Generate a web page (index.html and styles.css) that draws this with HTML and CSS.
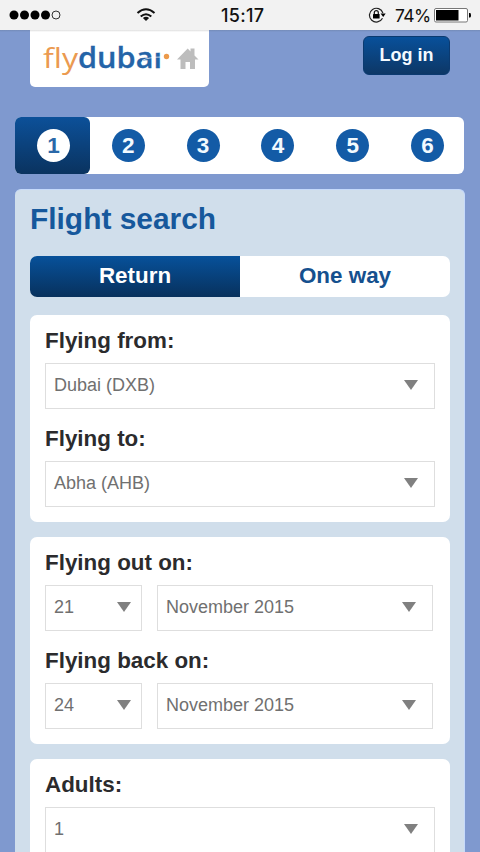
FILE: index.html
```html
<!DOCTYPE html>
<html lang="en">
<head>
<meta charset="utf-8">
<title>flydubai - Flight search</title>
<link rel="stylesheet" href="styles.css">
</head>
<body>
<div class="status">
  <svg class="signal" width="54" height="12" viewBox="0 0 54 12"><circle cx="5" cy="6" r="4.5"/><circle cx="15.5" cy="6" r="4.5"/><circle cx="26" cy="6" r="4.5"/><circle cx="36.500" cy="6" r="4.500"/><circle cx="47" cy="6" r="4" fill="none" stroke="#333"/></svg>
  <svg class="wifi" width="20" height="14" viewBox="0 0 20 14" fill="none" stroke="#111" stroke-width="2"><path d="M1.500 5Q10-2.500 18.500 5M4.700 8.600Q10 3.800 15.300 8.600"/><path d="M10 13 6.900 10Q10 7.700 13.100 10Z" fill="#111" stroke="none"/></svg>
  <span class="time">15:17</span>
  <svg class="lock" width="18" height="16" viewBox="0 0 18 16"><path d="M14.500 11.300A6.900 6.900 0 1 1 14.900 6" fill="none" stroke="#222" stroke-width="1.200"/><path d="M12.600 6.500H17.700L15.200 10Z"/><rect x="5" y="7" width="6.600" height="4.500" rx=".5"/><path d="M6.300 7V5.600a2 2 0 0 1 4 0V7" fill="none" stroke="#111" stroke-width="1.200"/></svg>
  <span class="percent">74%</span>
  <svg class="battery" width="38" height="15" viewBox="0 0 38 15"><rect x=".5" y=".5" width="33" height="13.500" rx="1.500" fill="#fff" stroke="#777"/><rect x="2" y="2" width="22.500" height="10.500"/><path d="M35 5h1q1 0 1 2.200t-1 2.300h-1z"/></svg>
</div>
<header class="header">
  <a class="logo">
    <svg width="179" height="57" viewBox="0 0 179 57">
      <text class="logo-fly" x="13" y="37.500" textLength="35" lengthAdjust="spacingAndGlyphs">fly</text>
      <text class="logo-dubai" x="48" y="38" textLength="84" lengthAdjust="spacingAndGlyphs">dubai</text>
      <path d="M122 14H134V22.500L122 23Z" fill="#fff"/>
      <path d="M112 30.500Q119 27 132 27" fill="none" stroke="#fff" stroke-width=".7"/>
      <circle cx="136.500" cy="26.500" r="2.700" fill="#ec9a4b"/>
      <path d="M147 29.500 157.700 18.500 160.500 21.500V18.500H164.500V25.500L168.500 29.500H165V39H160V32H155.500V39H150.500V29.500Z" fill="#bdbdbd"/>
    </svg>
  </a>
  <a class="login">Log in</a>
</header>
<nav class="steps">
  <div class="step active"><span>1</span></div>
  <div class="step"><span>2</span></div>
  <div class="step"><span>3</span></div>
  <div class="step"><span>4</span></div>
  <div class="step"><span>5</span></div>
  <div class="step"><span>6</span></div>
</nav>
<main class="panel">
  <h1>Flight search</h1>
  <div class="tabs"><div class="tab selected">Return</div><div class="tab">One way</div></div>
  <section class="card">
    <div class="label">Flying from:</div>
    <div class="select">Dubai (DXB)<i class="arrow"></i></div>
    <div class="label">Flying to:</div>
    <div class="select">Abha (AHB)<i class="arrow"></i></div>
  </section>
  <section class="card">
    <div class="label">Flying out on:</div>
    <div class="dates"><div class="select">21<i class="arrow"></i></div><div class="select">November 2015<i class="arrow"></i></div></div>
    <div class="label">Flying back on:</div>
    <div class="dates"><div class="select">24<i class="arrow"></i></div><div class="select">November 2015<i class="arrow"></i></div></div>
  </section>
  <section class="card">
    <div class="label">Adults:</div>
    <div class="select">1<i class="arrow"></i></div>
  </section>
</main>
</body>
</html>
```
FILE: styles.css
```css
* { box-sizing: border-box; }
body {
  margin: 0;
  height: 852px;
  overflow: hidden;
  background: #7f99cf;
  font-family: "Liberation Sans", Arial, sans-serif;
}
.status {
  display: flex;
  align-items: center;
  height: 30px;
  padding-left: 9px;
  background: #f2f2f2;
  color: #111;
  font-family: Inter, sans-serif;
}
.wifi { margin-left: 73px; }
.time { width: 46px; margin-left: 65px; font-size: 18px; font-weight: 500; letter-spacing: 0.3px; white-space: nowrap; }
.lock { margin-left: 101px; }
.percent { width: 36px; margin-left: 9px; font-size: 17.5px; letter-spacing: -0.6px; white-space: nowrap; }
.battery { margin-left: 3px; }
.header {
  display: flex;
  justify-content: space-between;
  align-items: flex-start;
  height: 87px;
  padding: 0 30px;
  background: linear-gradient(#748bb8, #7f99cf 2px);
}
.logo {
  width: 179px;
  height: 57px;
  background: linear-gradient(#dedede, #fff 2px);
  border-radius: 0 0 5px 5px;
}
.logo svg { display: block; }
.logo-fly { font: 400 27px "Open Sans", sans-serif; fill: #eb9a50; }
.logo-dubai { font: 600 28px "Open Sans", sans-serif; fill: #2464a8; stroke: #2464a8; stroke-width: .3px; }
.login {
  width: 87px;
  height: 39px;
  margin-top: 6px;
  border: 1px solid #0b3a70;
  border-radius: 6px;
  background: linear-gradient(#08509a, #0d3766);
  color: #f4faff;
  font-size: 18px;
  font-weight: bold;
  line-height: 37px;
  text-align: center;
}
.steps {
  display: grid;
  grid-template-columns: repeat(6, 74.8px);
  width: 449px;
  height: 57px;
  margin-left: 15px;
  background: #fff;
  border-radius: 6px;
}
.step { display: flex; align-items: center; padding-left: 22px; border-radius: 6px; }
.step span {
  width: 33px;
  height: 33px;
  border-radius: 50%;
  background: #135ba6;
  color: #f2faff;
  font-size: 22.5px;
  font-weight: bold;
  line-height: 33px;
  text-align: center;
}
.step.active { background: linear-gradient(#0c5099, #0a335f); }
.active span { background: #fff; color: #2a68a8; }
.panel {
  width: 450px;
  height: 680px;
  margin: 15px 0 0 15px;
  padding: 0 15px;
  border-top: 1px solid #c6dafb;
  border-right: 1px solid #c6dafb;
  border-radius: 6px;
  background: #d0deeb;
}
h1 { height: 66px; margin: 0; color: #16589c; font-size: 29.9px; line-height: 58px; }
.tabs {
  display: flex;
  width: 420px;
  height: 41px;
  overflow: hidden;
  border-radius: 7px;
  background: #fff;
}
.tab { flex: 1; color: #15508e; font-size: 22.4px; font-weight: bold; line-height: 39px; text-align: center; }
.selected { background: linear-gradient(#07519a, #08315d); color: #fff; }
.card { width: 420px; margin-bottom: 15px; padding: 10px 15px 15px; border-radius: 7px; background: #fff; }
.tabs + .card { margin-top: 18px; }
.label { height: 38px; color: #2b2b2d; font-size: 22.4px; font-weight: bold; line-height: 31px; }
.select {
  display: flex;
  justify-content: space-between;
  align-items: center;
  height: 46px;
  padding: 0 16px 2px 8px;
  border: 1px solid #dedede;
  color: #707070;
  font-size: 18px;
}
.select + .label, .dates + .label { margin-top: 14px; }
.arrow { border: 7px solid transparent; border-top: 10px solid #808080; border-bottom: 0; }
.dates { display: grid; grid-template-columns: 97px 276px; gap: 15px; }
.dates .select:first-child { padding-right: 10px; }
```
